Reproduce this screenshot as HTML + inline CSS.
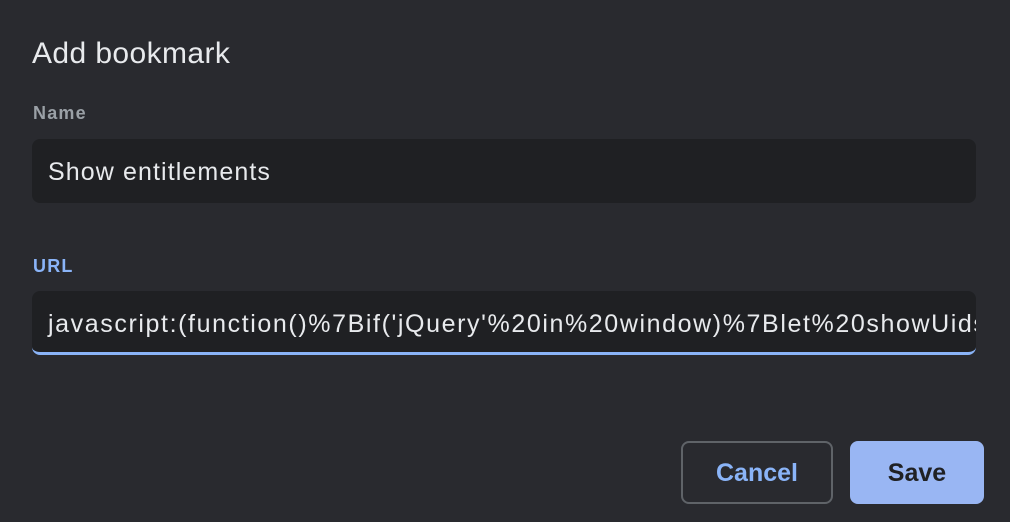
<!DOCTYPE html>
<html><head><style>
body{margin:0;width:1010px;height:522px;background:#292a2f;font-family:"Liberation Sans",sans-serif;position:relative;overflow:hidden}
div{position:absolute}
.t{left:32px;top:37px;font-size:30px;color:#e8eaed;letter-spacing:0.4px}
.l{left:33px;font-size:18px;font-weight:bold;letter-spacing:1.2px}
.in{left:32px;width:944px;height:64px;background:#1f2023;border-radius:8px;box-sizing:border-box;padding-left:16px;color:#e8eaed;font-size:25px;line-height:66px;white-space:nowrap;overflow:hidden}
.b{top:441px;height:63px;border-radius:8px;box-sizing:border-box;font-size:25px;font-weight:bold;text-align:center;line-height:65px}
</style></head><body>
<div class="t">Add bookmark</div>
<div class="l" style="top:103px;color:#9aa0a6">Name</div>
<div class="in" style="top:139px;letter-spacing:1.1px">Show entitlements</div>
<div class="l" style="top:256px;color:#8ab4f8">URL</div>
<div class="in" style="top:291px;border-bottom:3px solid #8ab4f8;letter-spacing:1.6px;padding-right:0">javascript:(function()%7Bif('jQuery'%20in%20window)%7Blet%20showUids</div>
<div class="b" style="left:681px;width:152px;border:2px solid #5f6368;color:#8ab4f8;line-height:61px">Cancel</div>
<div class="b" style="left:850px;width:134px;background:#99b6f3;color:#202124">Save</div>
</body></html>
